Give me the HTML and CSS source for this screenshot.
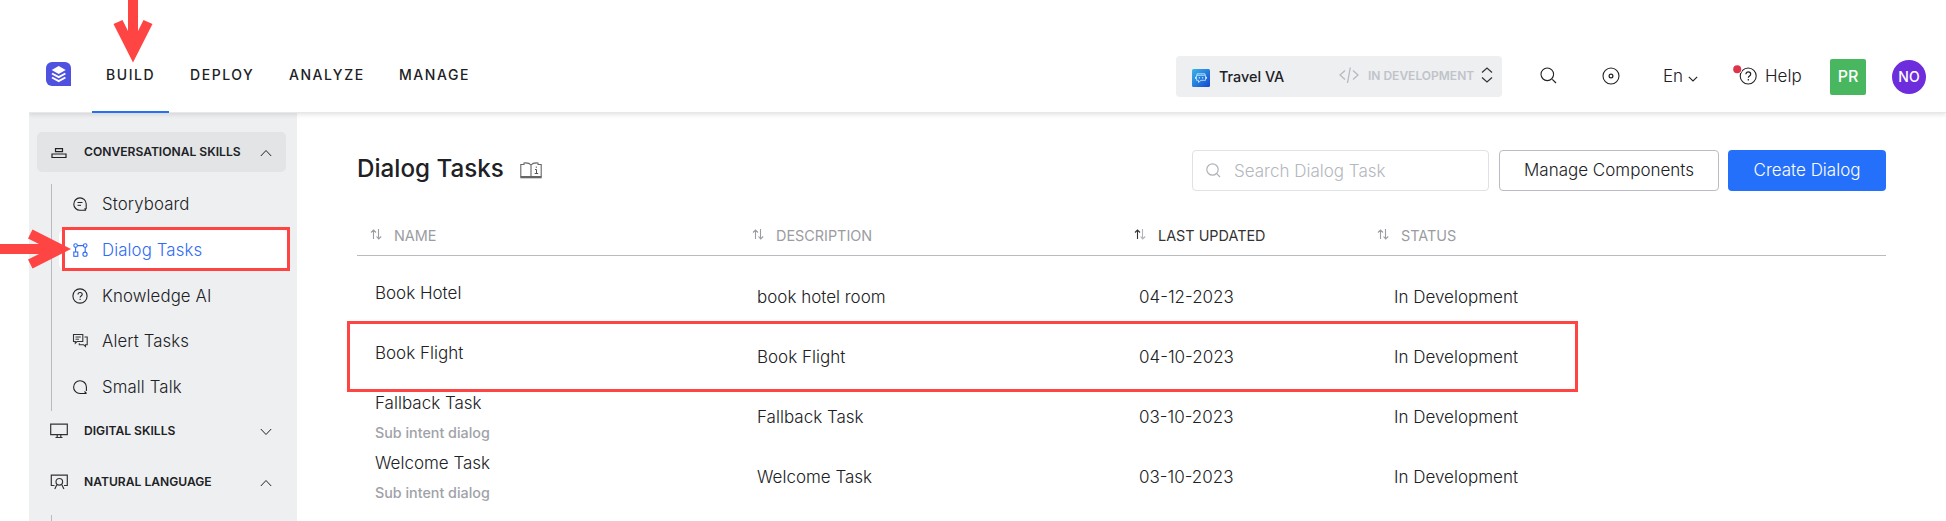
FILE: index.html
```html
<!DOCTYPE html>
<html lang="en">
<head>
<meta charset="utf-8">
<title>Dialog Tasks</title>
<link rel="stylesheet" href="styles.css">
</head>
<body>
<div class="page">
  <header class="topbar">
    <svg class="logo" viewBox="0 0 25 24"><path d="M6 0H19a6 6 0 0 1 6 6V24H6a6 6 0 0 1-6-6V6a6 6 0 0 1 6-6Z" fill="#4f52de"/><path d="M12.700 4l7 4-7 4-7-4z" fill="#fff"/><path d="M6 11.500l6.700 3.700 6.700-3.700M6 15.500l6.700 3.700 6.700-3.700" fill="none" stroke="#fff" stroke-width="1.900"/></svg>
    <nav class="nav">
      <a class="nav-item nav-active">BUILD</a>
      <a class="nav-item">DEPLOY</a>
      <a class="nav-item">ANALYZE</a>
      <a class="nav-item">MANAGE</a>
    </nav>
    <div class="bot-picker">
      <svg class="bot-icon" viewBox="0 0 18 18"><defs><linearGradient id="bot" x1="0" y1="0" x2="1" y2="1"><stop offset="0" stop-color="#38b6e8"/><stop offset="1" stop-color="#1646d2"/></linearGradient></defs><rect width="18" height="18" rx="1.500" fill="url(#bot)"/><path d="M5 6V4.800h8V6M4.500 6.300h9v5H9L6.500 13.500V11.300h-2z" fill="none" stroke="#b9e4ff" stroke-width=".9"/><path d="M3.500 7.800v2M14.500 7.800v2M7.300 8v1.500M10.700 8v1.500" stroke="#d8f0ff"/></svg>
      <span class="bot-name">Travel VA</span>
      <svg class="code-icon" viewBox="0 0 20 18"><path d="M6 4.500L1 9l5 4.500M14 4.500L19 9l-5 4.500M11.300 1.500L8.500 17" fill="none" stroke="#b6b9be" stroke-width="1.300"/></svg>
      <span class="bot-stage">IN DEVELOPMENT</span>
      <svg class="updown" viewBox="0 0 12 16"><path d="M1 5.500L6 1l5 4.500M1 10.500L6 15l5-4.500" fill="none" stroke="#333" stroke-width="1.200"/></svg>
    </div>
    <svg class="find" viewBox="0 0 17 17"><path d="M12.300 12.300L16 16" stroke="#222" stroke-width="1.200"/><circle cx="7.300" cy="7.300" r="6.300" fill="none" stroke="#222" stroke-width="1.100"/></svg>
    <svg class="target" viewBox="0 0 18 18"><circle cx="9" cy="9" r="8" fill="none" stroke="#222" stroke-width="1.100"/><circle cx="9" cy="9" r="1.900" fill="none" stroke="#222" stroke-width="1.200"/></svg>
    <div class="lang">En<svg class="lang-caret" viewBox="0 0 10 6"><path d="M.8.800L5 5 9.200.800" fill="none" stroke="#222" stroke-width="1.100"/></svg></div>
    <div class="help">
      <svg class="help-icon" viewBox="0 0 24 20"><circle cx="15.200" cy="11" r="8" fill="none" stroke="#222" stroke-width="1.100"/><path d="M12.900 9.200c0-3 4.800-3 4.800 0 0 1.800-2.400 1.700-2.400 3.500M15.300 14.100v1.400" fill="none" stroke="#222" stroke-width="1.200"/><circle cx="4.200" cy="4.200" r="5" fill="#fff"/><circle cx="4.200" cy="4.200" r="4" fill="#dc344c"/></svg>
      <span>Help</span>
    </div>
    <div class="badge-square">PR</div>
    <div class="badge-round">NO</div>
  </header>

  <div class="body">
    <aside class="sidebar">
      <div class="group group-open">
        <svg class="group-icon" viewBox="0 0 18 16"><path d="M5.500 4.700h7v3h-7zM2 10h14v3.500H2z" fill="none" stroke="#222" stroke-width="1.200"/></svg>
        <span class="group-label">CONVERSATIONAL SKILLS</span>
        <svg class="caret" viewBox="0 0 12 8"><path d="M.8 7L6 1.500 11.200 7" fill="none" stroke="#222" stroke-width="1"/></svg>
      </div>
      <div class="items">
        <a class="item"><svg class="item-icon" viewBox="0 0 16 16"><path d="M14 14.300H8A6.200 6.200 0 1 1 14.200 8v5M12.600 12.400L14 14.300" fill="none" stroke="#222" stroke-width="1.100"/><path d="M5.500 6.500h5M5.500 9.300h3.500" stroke="#222"/></svg>Storyboard</a>
        <a class="item item-active"><svg class="item-icon" viewBox="0 0 16 16"><g fill="none" stroke="#2f6bf5" stroke-width="1.100"><circle cx="3.600" cy="3.600" r="1.800"/><circle cx="13.200" cy="3.600" r="1.800"/><rect x="1.800" y="10" width="4" height="4.300"/><circle cx="13" cy="12.200" r="2.100"/><path d="M5.400 3.600h6M3.600 5.400V10M13.200 5.400V10"/></g></svg>Dialog Tasks</a>
        <a class="item"><svg class="item-icon" viewBox="0 0 16 16"><circle cx="8" cy="8" r="7.100" fill="none" stroke="#222" stroke-width="1.100"/><path d="M6 6.500c0-2.600 4.200-2.600 4.200 0 0 1.600-2.100 1.500-2.100 3M8.100 10.700v1.300" fill="none" stroke="#222" stroke-width="1.100"/></svg>Knowledge AI</a>
        <a class="item"><svg class="item-icon" viewBox="0 0 16 16"><path d="M1.500 1.500h9.300v7H5L3.300 10.200V8.500H1.500zM12.500 4h2.700v7.700h-1.700v1.800l-2-1.800H7.300V10.200" fill="none" stroke="#333" stroke-width="1.100"/><path d="M3.500 4h5.300M3.500 6.200h3.500" stroke="#333"/></svg>Alert Tasks</a>
        <a class="item"><svg class="item-icon" viewBox="0 0 16 16"><path d="M14.500 14.500H8A6.400 6.400 0 1 1 14.400 8v4M12.500 12.500L14.500 14.500" fill="none" stroke="#222" stroke-width="1.100"/></svg>Small Talk</a>
      </div>
      <div class="group group-digital">
        <svg class="group-icon" viewBox="0 0 18 16"><path d="M.7 1.200h16.600v10.500H.7zM5.500 14.500h7M7.200 12v2M10.800 12v2" fill="none" stroke="#333" stroke-width="1.200"/></svg>
        <span class="group-label">DIGITAL SKILLS</span>
        <svg class="caret" viewBox="0 0 12 8"><path d="M.8 1L6 6.500 11.200 1" fill="none" stroke="#222" stroke-width="1"/></svg>
      </div>
      <div class="group group-language">
        <svg class="group-icon" viewBox="0 0 18 16"><path d="M4.500 11.500H1.300V1.200h16v10.300H14" fill="none" stroke="#333" stroke-width="1.200"/><circle cx="9.300" cy="7.800" r="3.300" fill="none" stroke="#333" stroke-width="1.200"/><path d="M6.700 11l-1.900 4M12 11l1.900 4" stroke="#333" stroke-width="1.200"/></svg>
        <span class="group-label">NATURAL LANGUAGE</span>
        <svg class="caret" viewBox="0 0 12 8"><path d="M.8 7L6 1.500 11.200 7" fill="none" stroke="#222" stroke-width="1"/></svg>
      </div>
      <div class="items items-language"></div>
    </aside>

    <main class="main">
      <div class="toolbar">
        <h1 class="title">Dialog Tasks</h1>
        <svg class="book" viewBox="0 0 22 17"><path d="M11 14.500V3C9 .5 6 .8 4 1v1.500H.8V14.500H11V3C13 .5 16 .8 18 1v1.500h3.200V14.500H11" fill="none" stroke="#666" stroke-width="1.100"/><path d="M.3 15.300h21.400" stroke="#666" stroke-width="2"/><path d="M16.300 4.500v1.300M15 7.500h1.500v4M14.700 11.500h3.500" fill="none" stroke="#555"/></svg>
        <div class="search"><svg class="search-icon" viewBox="0 0 15 15"><path d="M10.700 10.700L14 14" stroke="#b0b3b9" stroke-width="1.200"/><circle cx="6.500" cy="6.500" r="5.700" fill="none" stroke="#b0b3b9" stroke-width="1.200"/></svg>Search Dialog Task</div>
        <button class="btn btn-manage">Manage Components</button>
        <button class="btn btn-create">Create Dialog</button>
      </div>
      <div class="row head">
        <div class="th"><svg class="sort" viewBox="0 0 12 11"><path d="M3.500 10V1M1 3.500L3.500 1 6 3.500M8.500 0v10M6.500 7.500l2.200 2.500 2.500-2.500" fill="none" stroke="#9b9da3" stroke-width="1.100"/></svg>NAME</div>
        <div class="th"><svg class="sort" viewBox="0 0 12 11"><path d="M3.500 10V1M1 3.500L3.500 1 6 3.500M8.500 0v10M6.500 7.500l2.200 2.500 2.500-2.500" fill="none" stroke="#9b9da3" stroke-width="1.100"/></svg>DESCRIPTION</div>
        <div class="th th-sorted"><svg class="sort" viewBox="0 0 12 11"><path d="M8.500 0v10M6.500 7.500l2.200 2.500 2.500-2.500" fill="none" stroke="#b0b2b7" stroke-width="1.100"/><path d="M3.500 10V1M1 3.500L3.500 1 6 3.500" fill="none" stroke="#333" stroke-width="1.100"/></svg>LAST UPDATED</div>
        <div class="th"><svg class="sort" viewBox="0 0 12 11"><path d="M3.500 10V1M1 3.500L3.500 1 6 3.500M8.500 0v10M6.500 7.500l2.200 2.500 2.500-2.500" fill="none" stroke="#9b9da3" stroke-width="1.100"/></svg>STATUS</div>
      </div>
      <div class="rows">
        <div class="row"><div class="name">Book Hotel</div><div>book hotel room</div><div class="date">04-12-2023</div><div>In Development</div></div>
        <div class="row"><div class="name">Book Flight</div><div>Book Flight</div><div class="date">04-10-2023</div><div>In Development</div></div>
        <div class="row"><div class="name-sub">Fallback Task<small>Sub intent dialog</small></div><div>Fallback Task</div><div class="date">03-10-2023</div><div>In Development</div></div>
        <div class="row"><div class="name-sub">Welcome Task<small>Sub intent dialog</small></div><div>Welcome Task</div><div class="date">03-10-2023</div><div>In Development</div></div>
      </div>
    </main>
  </div>

  <svg class="arrow arrow-down" viewBox="0 0 40 63"><path d="M15 0h10v31l5.500-11 9 4L20 62.500.500 24l9-4L15 31z" fill="#ff4444"/></svg>
  <svg class="arrow arrow-right" viewBox="0 0 72 40"><path d="M0 15h39L28 9.500l4.500-9L71 20 32.500 39.500 28 30.500 39 25H0z" fill="#ff4444"/></svg>
  <div class="mark mark-menu"></div>
  <div class="mark mark-row"></div>
</div>
</body>
</html>
```
FILE: styles.css
```css
* { box-sizing: border-box; }
body {
  margin: 0;
  background: #fff;
  color: #202124;
  font-family: Inter, "Liberation Sans", sans-serif;
  font-size: 17px;
  font-weight: 300;
}
svg { display: block; flex: none; }
.page {
  position: relative;
  display: flex;
  flex-direction: column;
  width: 1946px;
  height: 521px;
  overflow: hidden;
}

/* Top bar */
.topbar {
  display: flex;
  align-items: center;
  height: 74px;
  margin: 39px 0 0 29px;
  padding-left: 17px;
  border-bottom: 1px solid #e8e8e9;
  box-shadow: 0 2px 4px rgba(0, 0, 0, .1);
  flex: none;
  position: relative;
  clip-path: inset(0 0 -8px 0);
}
.logo { width: 25px; height: 24px; margin-top: -4px; }
.nav { display: flex; align-self: stretch; margin-left: 21px; width: 456px; }
.nav-item {
  padding: 27px 0 0 15px;
  margin-right: 6px;
  height: 74px;
  font-size: 14px;
  line-height: 17px;
  font-weight: 500;
  letter-spacing: 1.55px;
  white-space: nowrap;
}
.nav-item:nth-child(1) { width: 77px; padding-left: 14px; }
.nav-item:nth-child(2) { width: 93px; }
.nav-item:nth-child(3) { width: 104px; }
.nav-active { border-bottom: 2px solid #2570f5; }
.bot-picker {
  display: flex;
  align-items: center;
  width: 326px;
  height: 41px;
  margin: 1px 0 0 628px;
  padding-left: 16px;
  border-radius: 4px;
  background: #eeeff1;
  white-space: nowrap;
  flex: none;
}
.bot-icon { width: 18px; height: 18px; margin-top: 3px; }
.bot-name { width: 120px; margin-left: 9px; font-size: 14.4px; font-weight: 500; padding-top: 1px; }
.code-icon { width: 20px; height: 18px; margin-top: -3px; }
.bot-stage { width: 105px; margin: -2px 8px 0 9px; font-size: 12px; font-weight: 600; color: #c0c3c9; }
.updown { width: 12px; height: 16px; margin-top: -2px; }
.find { width: 17px; height: 17px; margin-left: 38px; }
.target { width: 18px; height: 18px; margin-left: 45px; }
.lang { display: flex; align-items: center; margin: 1px 0 0 43px; width: 70px; font-size: 17px; }
.lang-caret { width: 10px; height: 6px; margin: 5px 0 0 5px; }
.help { display: flex; align-items: center; width: 97px; margin-top: 1px; font-size: 17px; }
.help-icon { width: 24px; height: 20px; margin: -3px 8px 0 0; }
.badge-square, .badge-round {
  display: flex;
  align-items: center;
  justify-content: center;
  color: #fff;
  flex: none;
}
.badge-square { width: 36px; height: 36px; margin-top: 3px; border-radius: 2px; background: #48b760; font-size: 16px; font-weight: 500; padding-bottom: 3px; }
.badge-round { width: 34px; height: 34px; margin: 2px 0 0 26px; border-radius: 50%; background: #6d2ddd; font-size: 14px; font-weight: 500; }

/* Sidebar */
.body { display: flex; flex: 1; min-height: 0; }
.sidebar { width: 268px; margin-left: 29px; padding: 19px 11px 0 8px; background: #eeeff1; flex: none; }
.group { display: flex; align-items: center; height: 40px; padding: 0 14px 0 13px; border-radius: 5px; }
.group-open { background: #e3e4e6; }
.group-icon { width: 18px; height: 16px; }
.group-label { flex: 1; margin: -2px 0 0 16px; font-size: 12.1px; font-weight: 600; white-space: nowrap; }
.caret { width: 12px; height: 8px; margin-top: 2px; }
.items { height: 227px; margin: 12px 0 0 14px; padding-left: 7px; border-left: 1px solid #b8bbc0; }
.item { display: flex; align-items: center; height: 45.600px; width: 229px; padding-left: 13px; border-radius: 6px; font-size: 16.8px; letter-spacing: .12px; white-space: nowrap; }
.item:first-child { height: 40px; margin-bottom: 6px; }
.item-active { height: 40px; margin-bottom: 3px; background: #fff; color: #2f6bf5; }
.item-icon { width: 16px; height: 16px; margin-right: 14px; }
.group-digital { height: 40px; }
.group-language { margin-top: 11px; }
.items-language { margin-top: 13px; }

/* Content */
.main { width: 1529px; margin-left: 60px; }
.toolbar { display: flex; align-items: center; height: 41px; margin-top: 37px; }
.title { margin: -4px 0 0; width: 163px; font-size: 24.2px; font-weight: 500; white-space: nowrap; }
.book { width: 22px; height: 17px; }
.search {
  display: flex;
  align-items: center;
  width: 297px;
  height: 41px;
  margin-left: auto;
  padding-left: 13px;
  border: 1px solid #dfe1e4;
  border-radius: 4px;
  color: #b4b7bd;
}
.search-icon { width: 15px; height: 15px; margin-right: 13px; }
.btn { height: 41px; padding: 0 0 2px; border-radius: 4px; font: inherit; white-space: nowrap; }
.btn-manage { width: 220px; margin-left: 10px; border: 1px solid #b9bcc2; background: #fff; color: #202124; }
.btn-create { width: 158px; margin-left: 9px; border: 0; background: #2570fb; color: #fff; }
.row { display: grid; grid-template-columns: 382px 382px 255px 1fr; height: 60px; align-items: center; padding-left: 18px; white-space: nowrap; }
.head { grid-template-columns: 382px 382px 243px 1fr; height: 65px; padding: 24px 0 0 13px; border-bottom: 1px solid #b9bbbf; }
.th { display: flex; align-items: center; font-size: 14.4px; font-weight: 400; color: #9a9ca2; }
.th-sorted { color: #333; }
.sort { width: 12px; height: 11px; margin: -2px 12px 0 0; }
.rows { padding-top: 11px; }
.name { padding-bottom: 8px; }
.name-sub { line-height: 20px; padding-top: 2px; }
.name-sub small { display: block; margin-top: 10px; font-size: 14.300px; font-weight: 500; color: #a0a2a8; }

/* Annotations drawn over the screen */
.arrow { position: absolute; }
.arrow-down { left: 113px; top: 0; width: 40px; height: 63px; }
.arrow-right { left: 0; top: 229px; width: 72px; height: 40px; }
.mark { position: absolute; border: 3px solid #ff4444; }
.mark-menu { left: 62px; top: 227px; width: 228px; height: 44px; }
.mark-row { left: 347px; top: 321px; width: 1231px; height: 71px; }
```
